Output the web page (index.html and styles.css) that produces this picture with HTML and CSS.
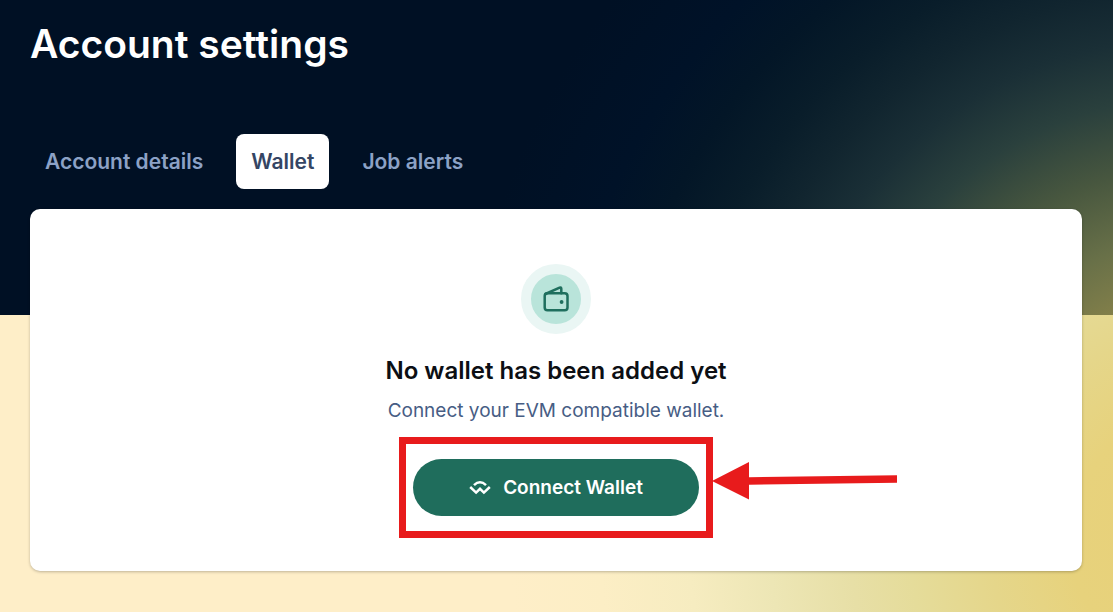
FILE: index.html
```html
<!DOCTYPE html>
<html lang="en">
<head>
<meta charset="utf-8">
<meta name="viewport" content="width=device-width, initial-scale=1">
<title>Account settings</title>
<link rel="stylesheet" href="styles.css">
</head>
<body class="page">
<main class="settings">
  <h1 class="title">Account settings</h1>
  <nav class="tabs" aria-label="Account settings">
    <a class="tab" href="#details">Account details</a>
    <a class="tab tab-active" href="#wallet" aria-current="page">Wallet</a>
    <a class="tab" href="#alerts">Job alerts</a>
  </nav>
  <section class="card" id="wallet">
    <div class="badge">
      <svg class="badge-icon" viewBox="0 0 30 30" fill="none" stroke="currentColor" stroke-width="2.5" stroke-linejoin="round" stroke-linecap="round" aria-hidden="true">
        <rect x="3.7" y="9.3" width="22.8" height="17" rx="2.8"/>
        <path d="M4.4 10 18.6 3.6Q20.3 2.9 20.3 4.8V9.3"/>
        <circle cx="20.6" cy="18" r="1.9" fill="currentColor" stroke="none"/>
      </svg>
    </div>
    <h2 class="heading">No wallet has been added yet</h2>
    <p class="hint">Connect your EVM compatible wallet.</p>
    <div class="action">
      <button class="connect" type="button">
        <svg class="connect-icon" viewBox="0 0 22 16" fill="none" stroke="currentColor" stroke-width="2.5" aria-hidden="true">
          <path d="M1.2 7 7.1 12.6 11 8.8 14.9 12.6 20.8 7"/>
          <path d="M5 5.1Q11-.7 17 5.1"/>
        </svg>
        Connect Wallet
      </button>
      <span class="highlight"></span>
      <svg class="arrow" viewBox="0 0 186 38" aria-hidden="true">
        <path fill="#e81b1c" d="M0 19 37 0V15.3L185 13.2V20.8L37 22.8V37.4Z"/>
      </svg>
    </div>
  </section>
</main>
</body>
</html>
```
FILE: styles.css
```css
* {
  box-sizing: border-box;
}

.page {
  margin: 0;
  min-height: 100vh;
  font-family: Inter, "Liberation Sans", sans-serif;
  background:
    radial-gradient(circle 720px at 1180px 440px, #9c9350 0, #87824a 130px, #687048 200px, #48573f 270px, #2a403d 340px, #1a2f36 400px, #11252f 450px, #091d2a 500px, #031627 560px, #001228 620px, #001024 720px) top / 100% 315px no-repeat,
    radial-gradient(circle 700px at 1200px 540px, #e8d078 0, #e7d27c 130px, #e5d68a 210px, #e5dc9a 290px, #e7dfa6 350px, #ede6b5 430px, #f6ecc0 510px, #fceec5 600px, #feeec8 690px);
}

.settings {
  padding: 14px 31px 40px 30px;
}

.title {
  margin: 0 0 60px;
  font-size: 39px;
  line-height: 60px;
  font-weight: 600;
  color: #fff;
}

.tabs {
  display: flex;
  gap: 18px;
  margin-bottom: 20px;
}

.tab {
  padding: 12px 15px;
  border-radius: 8px;
  font-size: 21px;
  line-height: 31px;
  font-weight: 600;
  color: #8ca2c6;
  text-decoration: none;
}

.tab-active {
  background: #fff;
  color: #344563;
}

.card {
  display: flex;
  flex-direction: column;
  align-items: center;
  padding: 55px 20px;
  border-radius: 10px;
  background: #fff;
  box-shadow: 0 1px 3px rgb(0 0 0 / 25%);
}

.badge {
  display: grid;
  place-items: center;
  width: 70px;
  height: 70px;
  border: 10px solid #eaf6f4;
  border-radius: 50%;
  background: #b9e4da;
  color: #1f6f5e;
}

.badge-icon {
  width: 30px;
  height: 30px;
}

.heading {
  margin: 20px 0 8px;
  font-size: 24px;
  line-height: 34px;
  font-weight: 600;
  color: #0c0f14;
}

.hint {
  margin: 0 0 33px;
  font-size: 19px;
  line-height: 30px;
  color: #475d84;
}

.action {
  position: relative;
}

.connect {
  display: flex;
  align-items: center;
  justify-content: center;
  gap: 12px;
  width: 286px;
  height: 57px;
  border: 0;
  border-radius: 29px;
  background: #1f6d5c;
  color: #fff;
  font: inherit;
  font-size: 19px;
  font-weight: 600;
}

.connect-icon {
  width: 22px;
  height: 16px;
}

.highlight {
  position: absolute;
  inset: -22px -14px;
  border: 7px solid #e81b1c;
  pointer-events: none;
}

.arrow {
  position: absolute;
  left: 299px;
  top: 3px;
  width: 186px;
  height: 38px;
}
```
